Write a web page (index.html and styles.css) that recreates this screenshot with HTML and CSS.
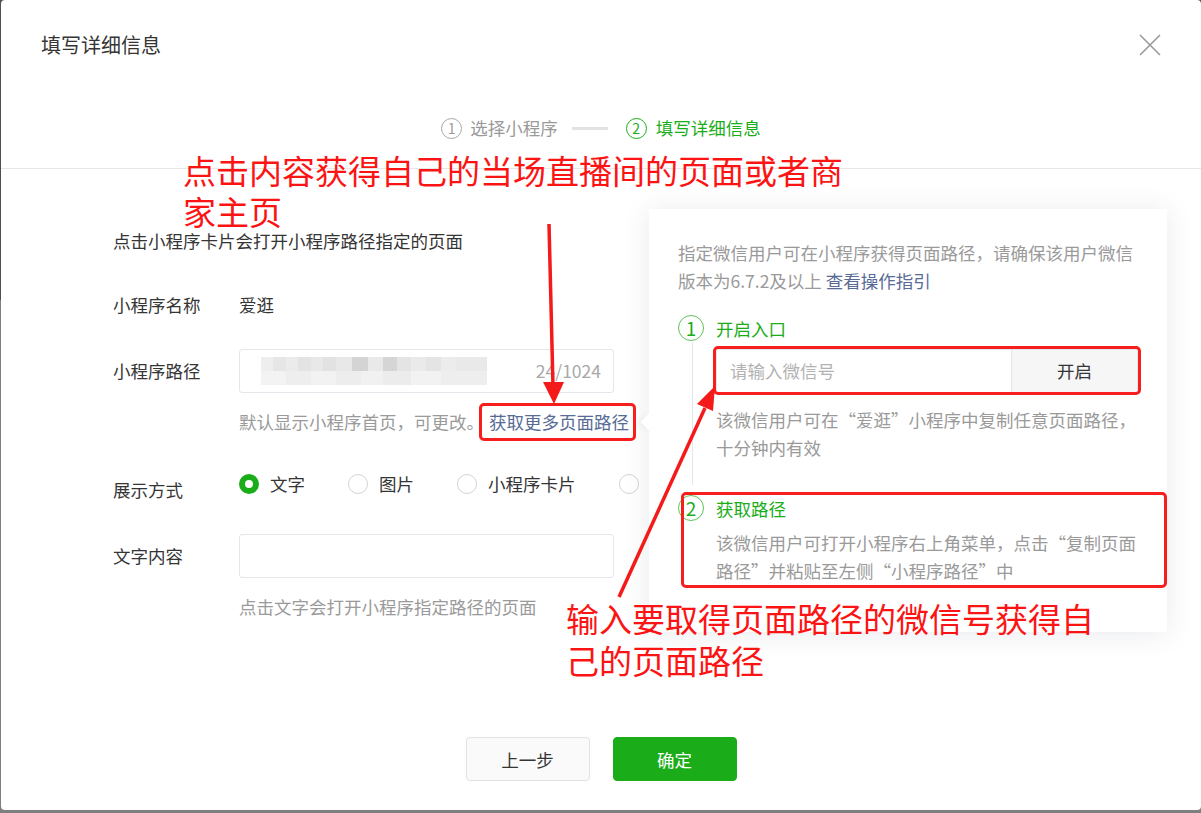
FILE: index.html
```html
<!DOCTYPE html>
<html lang="zh-CN">
<head>
    <meta charset="UTF-8">
    <meta name="viewport" content="width=device-width, initial-scale=1.0">
    <title>填写详细信息</title>
    <link rel="stylesheet" href="styles.css">
</head>
<body>
    <div class="dialog">
        <div class="dialog-hd">
            <h3 class="dialog-title">填写详细信息</h3>
            <svg class="close" width="22" height="22" viewBox="0 0 22 22">
                <path d="M1 1L21 21M21 1L1 21" stroke="#999" stroke-width="1.6" fill="none"/>
            </svg>
        </div>

        <div class="steps">
            <div class="step">
                <span class="step-num">1</span>
                <span class="step-text">选择小程序</span>
            </div>
            <span class="step-line"></span>
            <div class="step active">
                <span class="step-num">2</span>
                <span class="step-text">填写详细信息</span>
            </div>
        </div>

        <div class="form">
            <p class="form-desc">点击小程序卡片会打开小程序路径指定的页面</p>

            <div class="form-row">
                <label class="form-label">小程序名称</label>
                <div class="form-value">爱逛</div>
            </div>

            <div class="form-row gap-lg">
                <label class="form-label">小程序路径</label>
                <div class="input path-input">
                    <span class="mosaic"></span>
                    <span class="counter">24/1024</span>
                </div>
            </div>
            <p class="form-tips">默认显示小程序首页，可更改。<a class="link">获取更多页面路径</a></p>

            <div class="form-row radio-row">
                <label class="form-label">展示方式</label>
                <div class="radio-group">
                    <span class="radio checked"><i></i>文字</span>
                    <span class="radio"><i></i>图片</span>
                    <span class="radio"><i></i>小程序卡片</span>
                    <span class="radio"><i></i>图文</span>
                </div>
            </div>

            <div class="form-row gap-lg">
                <label class="form-label">文字内容</label>
                <div class="input"></div>
            </div>
            <p class="form-tips">点击文字会打开小程序指定路径的页面</p>
        </div>

        <div class="popover">
            <p class="pop-desc">指定微信用户可在小程序获得页面路径，请确保该用户微信版本为6.7.2及以上 <a class="link">查看操作指引</a></p>

            <div class="pop-step first">
                <div class="pop-step-hd"><span class="pop-num">1</span>开启入口</div>
                <div class="pop-step-bd line">
                    <div class="input-group">
                        <span class="ig-input">请输入微信号</span>
                        <span class="ig-btn">开启</span>
                    </div>
                    <p class="pop-tips">该微信用户可在“爱逛”小程序中复制任意页面路径，十分钟内有效</p>
                </div>
            </div>

            <div class="pop-step">
                <div class="pop-step-hd"><span class="pop-num">2</span>获取路径</div>
                <div class="pop-step-bd">
                    <p class="pop-tips">该微信用户可打开小程序右上角菜单，点击“复制页面路径”并粘贴至左侧“小程序路径”中</p>
                </div>
            </div>
        </div>

        <div class="dialog-ft">
            <button class="btn btn-default">上一步</button>
            <button class="btn btn-primary">确定</button>
        </div>
    </div>

    <!-- annotations drawn over the screenshot -->
    <div class="note note-top">点击内容获得自己的当场直播间的页面或者商家主页</div>
    <div class="note note-bottom">输入要取得页面路径的微信号获得自己的页面路径</div>
    <div class="mark mark-link"></div>
    <div class="mark mark-input"></div>
    <div class="mark mark-step"></div>
    <svg class="arrows" width="1201" height="813" viewBox="0 0 1201 813">
        <line x1="549" y1="224" x2="553" y2="386" stroke="#f51a1a" stroke-width="3.5"/>
        <polygon points="543,382 564,382 554,404" fill="#f51a1a"/>
        <line x1="619" y1="597" x2="705" y2="408" stroke="#f51a1a" stroke-width="3.5"/>
        <polygon points="697,404 713,411 715,386" fill="#f51a1a"/>
    </svg>
</body>
</html>
```

FILE: styles.css
```css
* {
    box-sizing: border-box;
}

body {
    margin: 0;
    width: 1201px;
    height: 813px;
    overflow: hidden;
    position: relative;
    background: linear-gradient(#505050 0, #505050 300px, #7f7f7f 300px);
    font-family: "Noto Sans CJK SC", "Microsoft YaHei", sans-serif;
    font-size: 17.5px;
    color: #353535;
}

p {
    margin: 0;
}

.link {
    color: #576b95;
    text-decoration: none;
}

.dialog {
    position: relative;
    margin-left: 1px;
    width: 1200px;
    height: 810px;
    background: #fff;
    border-radius: 4px;
    display: flex;
    flex-direction: column;
}

.dialog-hd {
    display: flex;
    justify-content: space-between;
    align-items: center;
    padding: 31px 40px 0;
}

.dialog-title {
    margin: 0;
    font-size: 20px;
    font-weight: normal;
    line-height: 28px;
}

/* steps */
.steps {
    display: flex;
    justify-content: center;
    align-items: center;
    margin-top: 55px;
    padding-bottom: 26px;
    border-bottom: 1px solid #e7e7e7;
}

.step {
    display: flex;
    align-items: center;
    line-height: 28px;
    color: #9a9a9a;
}

.step-num {
    width: 21px;
    height: 21px;
    border: 1px solid #a6a6a6;
    border-radius: 50%;
    font-size: 14px;
    line-height: 19px;
    text-align: center;
    margin-right: 8px;
}

.step.active {
    color: #1aad19;
}

.step.active .step-num {
    border-color: #1aad19;
    margin-right: 9px;
}

.step-line {
    width: 36px;
    height: 3px;
    background: #e1e2e4;
    margin: 0 18px 0 14px;
}

/* form */
.form {
    padding: 58px 0 0 112px;
}

.form-desc {
    line-height: 28px;
}

.form-row {
    display: flex;
    align-items: center;
    margin-top: 36px;
    line-height: 28px;
}

.form-row.gap-lg {
    margin-top: 30px;
}

.form-label {
    width: 126px;
    flex-shrink: 0;
}

.input {
    width: 375px;
    height: 44px;
    border: 1px solid #e4e6eb;
    border-radius: 3px;
    display: flex;
    align-items: center;
}

.mosaic {
    width: 226px;
    height: 28px;
    margin-left: 21px;
    background:
        linear-gradient(to right, #eeeeee 0 12px, #e6e6e6 12px 25px, #ebebeb 25px 37px, #e3e3e3 37px 50px, #e8e8e8 50px 62px, #e2e2e2 62px 75px, #e8e8e8 75px 91px, #d4d4d4 91px 107px, #e9e9e9 107px 122px, #d5d5d5 122px 136px, #e4e4e4 136px 150px, #eaeaea 150px 165px, #e4e4e4 165px 180px, #ececec 180px 195px, #e9e9e9 195px 226px) top / 100% 50% no-repeat,
        linear-gradient(to right, #f3f3f3 0 25px, #eeeeee 25px 50px, #f2f2f2 50px 75px, #ededed 75px 100px, #f1f1f1 100px 122px, #ececec 122px 150px, #f2f2f2 150px 180px, #eeeeee 180px 226px) bottom / 100% 50% no-repeat;
}

.counter {
    margin-left: auto;
    padding-right: 12px;
    color: #a8a8a8;
}

.form-tips {
    margin-top: 15px;
    padding-left: 126px;
    line-height: 28px;
    color: #9a9a9a;
}

.form-tips .link {
    margin-left: 5px;
}

.form-row.radio-row {
    align-items: flex-start;
    margin-top: 34px;
}

.radio-row .form-label {
    padding-top: 6px;
}

.radio-group {
    display: flex;
}

.radio {
    display: flex;
    align-items: center;
    margin-right: 43px;
}

.radio i {
    width: 20px;
    height: 20px;
    border: 1px solid #d3d3d3;
    border-radius: 50%;
    margin-right: 11px;
}

.radio.checked i {
    border: 6px solid #1aad19;
}

/* popover */
.popover {
    position: absolute;
    left: 648px;
    top: 209px;
    width: 518px;
    height: 423px;
    z-index: 1;
    padding: 30px 27px 0 29px;
    background: #fff;
    box-shadow: 0 2px 26px rgba(40, 50, 80, 0.1);
    color: #9a9a9a;
}

.popover::before {
    content: "";
    position: absolute;
    left: -6px;
    top: 207px;
    width: 12px;
    height: 12px;
    background: #fff;
    transform: rotate(45deg);
    box-shadow: -3px 3px 6px rgba(40, 50, 80, 0.05);
}

.pop-desc,
.pop-tips {
    line-height: 28px;
}

.pop-step.first {
    margin-top: 19px;
}

.pop-step {
    margin-top: 9px;
}

.pop-step-hd {
    display: flex;
    align-items: center;
    height: 28px;
    color: #1aad19;
}

.pop-num {
    width: 26px;
    height: 26px;
    border: 1px solid #5cc25b;
    border-radius: 50%;
    font-size: 19px;
    line-height: 24px;
    text-align: center;
    margin-right: 12px;
}

.pop-step-bd {
    margin-left: 14px;
    padding: 7px 0 0 24px;
}

.pop-step-bd.line {
    border-left: 1px solid #e5e5e5;
    padding: 7px 0 23px 23px;
}

.input-group {
    display: flex;
    width: 422px;
    height: 44px;
    border: 1px solid #e4e6eb;
    border-radius: 3px;
    margin-bottom: 13px;
}

.ig-input {
    flex: 1;
    padding-left: 13px;
    line-height: 42px;
    color: #b2b2b2;
}

.ig-btn {
    width: 126px;
    border-left: 1px solid #e4e6eb;
    background: #f6f6f6;
    text-align: center;
    line-height: 42px;
    color: #353535;
}

/* footer */
.dialog-ft {
    margin-top: auto;
    display: flex;
    justify-content: center;
    gap: 23px;
    padding-bottom: 29px;
}

.btn {
    width: 124px;
    height: 44px;
    border-radius: 4px;
    font-family: inherit;
    font-size: 17.5px;
    cursor: pointer;
}

.btn-default {
    background: #fafafa;
    border: 1px solid #e2e2e2;
    color: #353535;
}

.btn-primary {
    background: #1aad19;
    border: 1px solid #1aad19;
    color: #fff;
}

/* annotations */
.note {
    position: absolute;
    z-index: 2;
    color: #fc1414;
    font-size: 33px;
}

.note-top {
    left: 183px;
    top: 150px;
    width: 672px;
    line-height: 41px;
}

.note-bottom {
    left: 566px;
    top: 597px;
    width: 540px;
    line-height: 42px;
}

.mark {
    position: absolute;
    z-index: 2;
    border: 3px solid #f71e1e;
    border-radius: 5px;
}

.mark-link {
    left: 479px;
    top: 403px;
    width: 157px;
    height: 38px;
}

.mark-input {
    left: 713px;
    top: 346px;
    width: 428px;
    height: 49px;
}

.mark-step {
    left: 681px;
    top: 492px;
    width: 486px;
    height: 96px;
}

.arrows {
    position: absolute;
    left: 0;
    top: 0;
    z-index: 3;
    pointer-events: none;
}
```
